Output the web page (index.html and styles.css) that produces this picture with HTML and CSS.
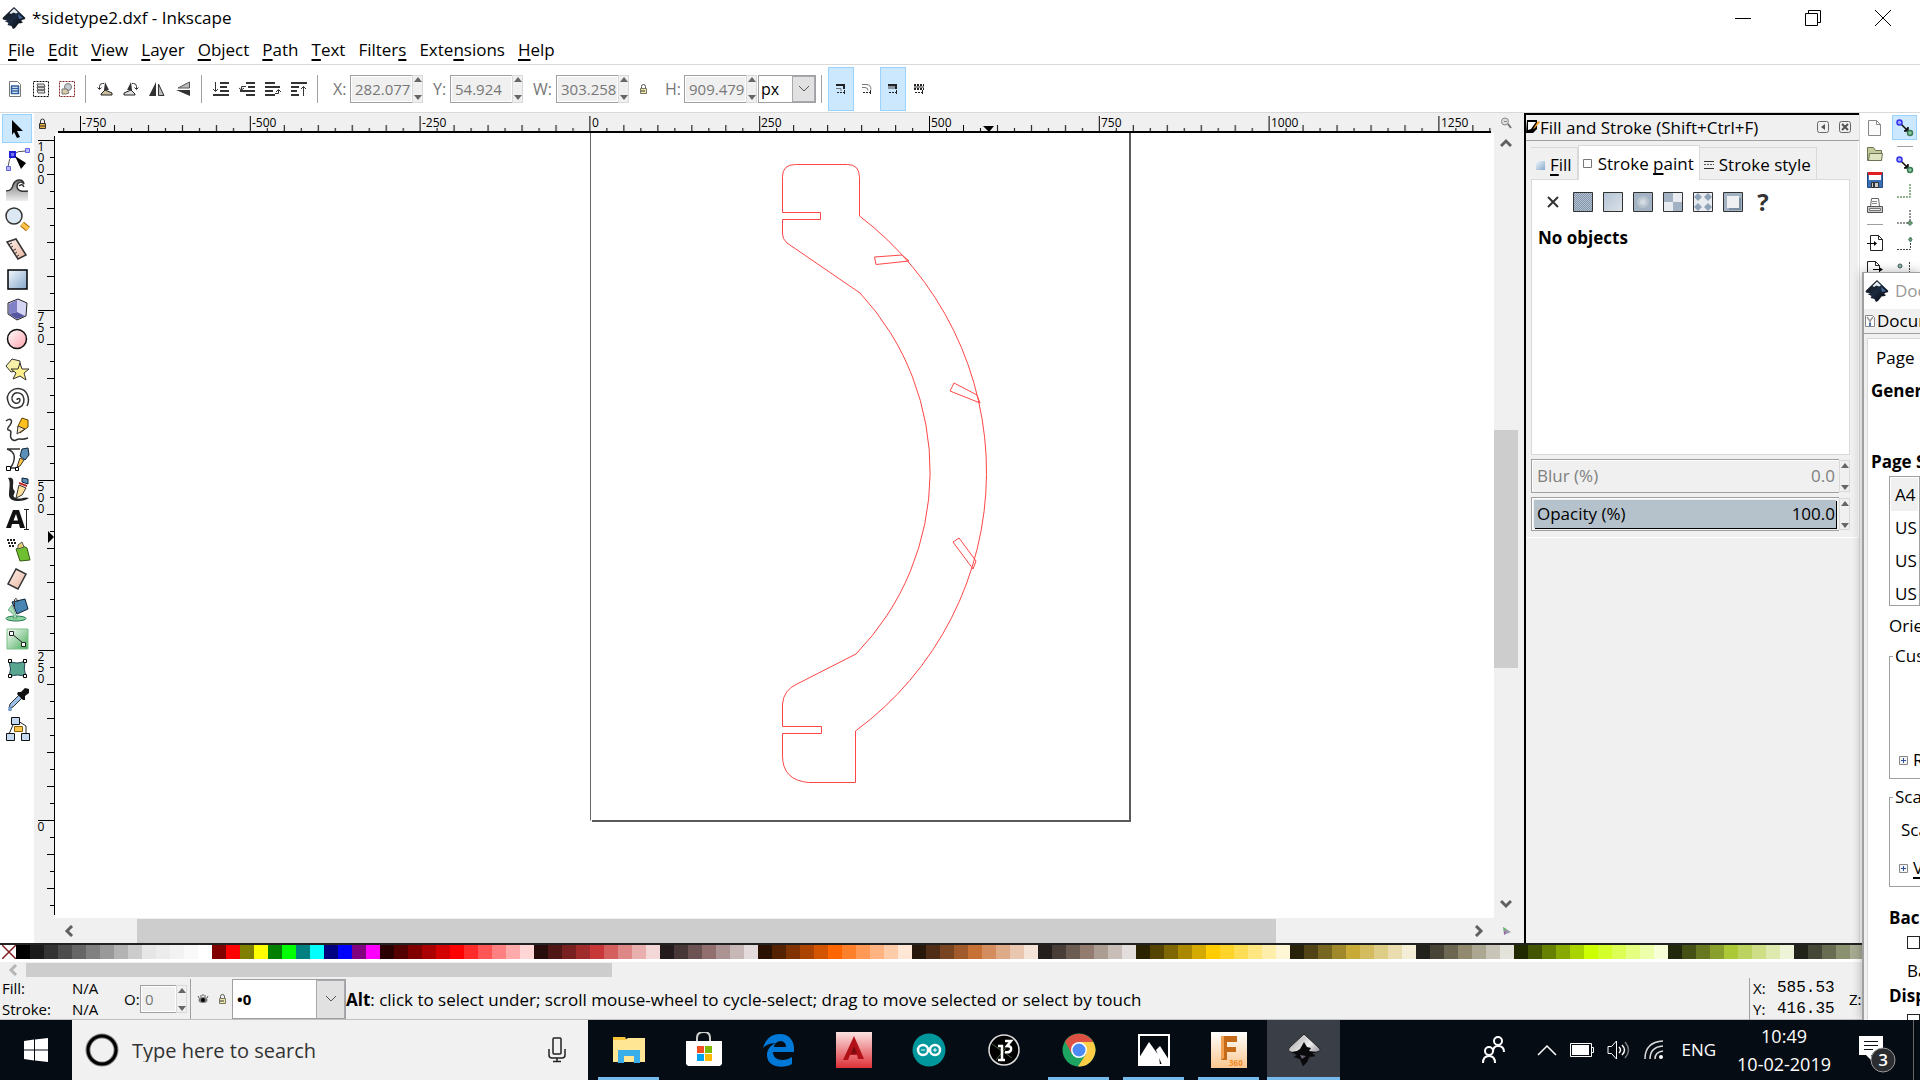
FILE: index.html
```html
<!DOCTYPE html>
<html lang="en">
<head>
<meta charset="utf-8">
<title>*sidetype2.dxf - Inkscape</title>
<link rel="stylesheet" href="styles.css">
</head>
<body>
<svg class="defs" width="0" height="0" aria-hidden="true">
  <defs>
    <linearGradient id="gInk" x1="0" y1="0" x2="1" y2="1"><stop offset="0" stop-color="#111"/><stop offset=".5" stop-color="#1b2a40"/><stop offset="1" stop-color="#000"/></linearGradient>
    <linearGradient id="gInkLight" x1="0" y1="0" x2="1" y2="1"><stop offset="0" stop-color="#999"/><stop offset=".5" stop-color="#eee"/><stop offset="1" stop-color="#445"/></linearGradient>
    <linearGradient id="gBlue" x1="0" y1="0" x2="1" y2="1"><stop offset="0" stop-color="#f4f8fc"/><stop offset="1" stop-color="#84a8cc"/></linearGradient>
    <linearGradient id="gPink" x1="0" y1="0" x2="1" y2="1"><stop offset="0" stop-color="#fff"/><stop offset="1" stop-color="#ffa0ac"/></linearGradient>
    <linearGradient id="gPeach" x1="0" y1="0" x2="1" y2="1"><stop offset="0" stop-color="#fdf1ec"/><stop offset="1" stop-color="#eab5a0"/></linearGradient>
    <linearGradient id="gGreen" x1="0" y1="0" x2="1" y2="1"><stop offset="0" stop-color="#fff"/><stop offset="1" stop-color="#45ab58"/></linearGradient>
    <linearGradient id="gGrey" x1="0" y1="0" x2="0" y2="1"><stop offset="0" stop-color="#777"/><stop offset="1" stop-color="#eee"/></linearGradient>
    <linearGradient id="gCad" x1="0" y1="0" x2="0" y2="1"><stop offset="0" stop-color="#fbe3e2"/><stop offset="1" stop-color="#de3038"/></linearGradient>
    <linearGradient id="gFusion" x1="0" y1="0" x2="0" y2="1"><stop offset="0" stop-color="#fff"/><stop offset="1" stop-color="#fac78f"/></linearGradient>
    <pattern id="mesh" width="2" height="2" patternUnits="userSpaceOnUse"><path fill="#8296ad" d="M0 0h1v1H0zM1 1h1v1H1z"/></pattern>
    <pattern id="ticksH" x="25" width="169.8" height="19" patternUnits="userSpaceOnUse">
      <path stroke="#000" d="M.5 3v16M17.5 15v4M34.5 12v7M51.5 15v4M68.5 12v7M85.5 15v4M102.5 12v7M119.5 15v4M136.5 12v7M153.5 15v4"/>
    </pattern>
    <pattern id="ticksV" y="7" width="21" height="170" patternUnits="userSpaceOnUse">
      <path stroke="#000" d="M4 .5h17M16 17.5h5M13 34.5h8M16 51.5h5M13 68.5h8M16 85.5h5M13 102.5h8M16 119.5h5M13 136.5h8M16 153.5h5"/>
    </pattern>
    <symbol id="ink" viewBox="0 0 24 24"><path d="M12 1 23 11.500c1 1.500-1 2-3 2.500-1.500 1-.5 1.500 1 2-1 1.500-3 1-4.500 1.500L15 19.500 13 22l-2 1-1.500-3-4-1 1-2-4-2 3-.5L1 13.500c-1-1 0-2 0-2z" fill="url(#gInk)"/><path d="m12 2.500 4 4-2 1-2.500-1L9 8 7.500 7z" fill="#e8edf4"/><path d="m16 8 5 4-4 1z" fill="#4a6c9c"/></symbol>
    <symbol id="lockOpen" viewBox="0 0 12 12"><path fill="none" stroke="#555" d="M4.500 5.500v-2q0-2 2-2t2 2v2"/><path fill="#f0e8a8" stroke="#776" d="M3.500 5.500h6v5h-6z"/><path stroke="#333" d="M4 8h4"/></symbol>
    <symbol id="snap" viewBox="0 0 18 18"><path stroke="#111" stroke-width="1.500" d="m5 5 7 7M12 8v4H8"/><circle cx="3.500" cy="3.500" r="2.500" fill="#a9a9ff" stroke="#3030e8" stroke-width="1.500"/><circle cx="14" cy="14" r="2.500" fill="#8cc89c" stroke="#3a7a55" stroke-width="1.500"/></symbol>
    <symbol id="chev" viewBox="0 0 12 12"><path fill="none" stroke="#606060" stroke-width="3" d="m1 9 5-5 5 5"/></symbol>
    <symbol id="plusBox" viewBox="0 0 9 9"><path fill="#f4f4f4" stroke="#888" d="M.5.5h8v8h-8z"/><path stroke="#2f4f9f" d="M2 4.500h5M4.500 2v5"/></symbol>
  </defs>
</svg>

<div class="desktop">
<main class="app">
  <header class="titlebar">
    <svg class="i24"><use href="#ink"/></svg>
    <h1 class="title">*sidetype2.dxf - Inkscape</h1>
    <div class="winbtns">
      <button aria-label="Minimize"><svg class="i16" viewBox="0 0 16 16"><path stroke="#000" d="M0 8.500h16"/></svg></button>
      <button aria-label="Restore"><svg class="i16" viewBox="0 0 16 16"><path fill="none" stroke="#000" d="M.5 3.500h12v12H.5zM3.500 3V.5h12v12H13"/></svg></button>
      <button aria-label="Close"><svg class="i16" viewBox="0 0 16 16"><path stroke="#000" d="m0 0 16 16M16 0 0 16"/></svg></button>
    </div>
  </header>

  <nav class="menubar">
    <button><u>F</u>ile</button><button><u>E</u>dit</button><button><u>V</u>iew</button><button><u>L</u>ayer</button><button><u>O</u>bject</button><button><u>P</u>ath</button><button><u>T</u>ext</button><button>Filter<u>s</u></button><button>Exte<u>n</u>sions</button><button><u>H</u>elp</button>
  </nav>

  <div class="toolbar">
    <div class="group">
      <button aria-label="Select all"><svg class="i16" viewBox="0 0 16 16"><path fill="#fff" stroke="#777" d="M2.500.5h8l3 3v12h-11z"/><path stroke="#2f5f9f" stroke-width="1.500" d="M4 5h8M4 7.500h8M4 10h8M4 12.500h8M4.500 5v8M11.500 5v8"/></svg></button>
      <button aria-label="Select all in all layers"><svg class="i16" viewBox="0 0 16 16"><path fill="none" stroke="#000" stroke-dasharray="2 1" d="M.5.5h15v15H.5z"/><path fill="#ddd" stroke="#555" d="m4 9 7 0 1 3H5zM4 6h7l1 3H5zM4 3h7l1 3H5z"/></svg></button>
      <button aria-label="Deselect"><svg class="i16" viewBox="0 0 16 16"><path fill="none" stroke="#802020" stroke-dasharray="2 1" d="M.5.5h15v15H.5z"/><circle cx="9" cy="6" r="3.500" fill="#c4ccd2" stroke="#777"/><path fill="#d8cba8" stroke="#777" d="M3 8h5l2 4-3 1H3z"/></svg></button>
    </div>
    <div class="group">
      <button aria-label="Rotate left"><svg class="i16" viewBox="0 0 16 16"><path fill="none" stroke="#333" d="M2.500 8V5.500q0-3 3-3H7M.5 6.500l2 2 2-2"/><path fill="#333" d="m8 1 4 8H7z"/><path fill="#c9bf9a" stroke="#222" d="m4 13 4-4 7 3v2H4z"/></svg></button>
      <button aria-label="Rotate right"><svg class="i16" viewBox="0 0 16 16"><path fill="none" stroke="#333" d="M13.500 8V5.500q0-3-3-3H9M11.500 6.500l2 2 2-2"/><path fill="#333" d="M8 1 4 9h5z"/><path fill="#ddd" stroke="#222" d="m12 13-4-4-7 3v2h11z"/></svg></button>
      <button aria-label="Flip horizontally"><svg class="i16" viewBox="0 0 16 16"><path fill="#333" d="M7 1v14H0z"/><path fill="#bbb" stroke="#333" d="M9.500 3v11.500H15z"/></svg></button>
      <button aria-label="Flip vertically"><svg class="i16" viewBox="0 0 16 16"><path fill="#bbb" stroke="#555" d="M14.500 1v6H3z"/><path fill="#333" d="M15 9v6L1 9z"/></svg></button>
    </div>
    <div class="group">
      <button aria-label="Lower to bottom"><svg class="i16" viewBox="0 0 16 16"><path stroke="#333" stroke-width="2" d="M7 2h9M7 6h7M7 10h9M0 14h16"/><path fill="none" stroke="#333" d="M2.500 1v9M0 8l2.500 2.500L5 8"/></svg></button>
      <button aria-label="Lower"><svg class="i16" viewBox="0 0 16 16"><path stroke="#333" stroke-width="2" d="M7 2h9M9 6h7M1 10h15M7 14h9"/><path fill="none" stroke="#333" d="M7 5.500H2.500V9M0 7l2.500 2L5 7"/></svg></button>
      <button aria-label="Raise"><svg class="i16" viewBox="0 0 16 16"><path stroke="#333" stroke-width="2" d="M0 2h10M0 6h15M0 10h8M0 14h10"/><path fill="none" stroke="#333" d="M10 12.500h3.500V9M11 11l2.500-2.500L16 11"/></svg></button>
      <button aria-label="Raise to top"><svg class="i16" viewBox="0 0 16 16"><path stroke="#333" stroke-width="2" d="M0 2h16M0 6h8M0 10h6M0 14h8"/><path fill="none" stroke="#333" d="M12.500 15V6M10 8l2.500-2.500L15 8"/></svg></button>
    </div>
    <div class="group fields">
      <label for="fx">X:</label><input class="num" id="fx" value="282.077" disabled><span class="spin"><button aria-label="Increase X"></button><button aria-label="Decrease X"></button></span>
      <label for="fy">Y:</label><input class="num" id="fy" value="54.924" disabled><span class="spin"><button aria-label="Increase Y"></button><button aria-label="Decrease Y"></button></span>
      <label for="fw">W:</label><input class="num" id="fw" value="303.258" disabled><span class="spin"><button aria-label="Increase width"></button><button aria-label="Decrease width"></button></span>
      <button class="lock" aria-label="Lock proportions"><svg class="i12"><use href="#lockOpen"/></svg></button>
      <label for="fh">H:</label><input class="num" id="fh" value="909.479" disabled><span class="spin"><button aria-label="Increase height"></button><button aria-label="Decrease height"></button></span>
      <select class="combo unit" aria-label="Unit"><option>px</option></select>
    </div>
    <div class="group toggles">
      <button class="on" aria-label="Scale stroke width"><svg class="i12" viewBox="0 0 12 12"><path stroke="#222" stroke-width="2" fill="none" d="M1 2h8v4"/><path stroke="#777" fill="none" d="M1 5.500h5V8"/><path stroke="#222" d="M2 9.500h9M9.500 7v4" stroke-dasharray="2 1"/></svg></button>
      <button aria-label="Scale corners"><svg class="i12" viewBox="0 0 12 12"><path stroke="#777" fill="none" d="M1 1.500h4q5 0 5 5M1 4.500h3q3 0 3 3"/><path stroke="#222" d="M2 9.500h9M9.500 7v4" stroke-dasharray="2 1"/></svg></button>
      <button class="on" aria-label="Move gradients"><svg class="i12" viewBox="0 0 12 12"><path fill="#8a95a5" d="M1 1h8v5H1z"/><path stroke="#222" stroke-width="2" fill="none" d="M1 2h8v4"/><path stroke="#222" d="M2 9.500h9M9.500 7v4" stroke-dasharray="2 1"/></svg></button>
      <button aria-label="Move patterns"><svg class="i12" viewBox="0 0 12 12"><path stroke="#222" stroke-width="2" d="M1 2h10M1 6h10" stroke-dasharray="2 1"/><path stroke="#222" d="M1 4h10"/><path stroke="#222" d="M2 9.500h9M9.500 7v4" stroke-dasharray="2 1"/></svg></button>
    </div>
  </div>

  <div class="work">
    <div class="toolbox">
      <button class="on" aria-label="Select"><svg viewBox="0 0 24 24"><path d="m7 3 11 11h-6l3 6-3 1-3-6-2 3z"/></svg></button>
      <button aria-label="Edit nodes"><svg viewBox="0 0 24 24"><path fill="none" stroke="#555" d="M3 20Q4 3 21 4"/><path fill="#b8b8ff" stroke="#6060e0" d="M1.500 19.500h4v4h-4zM20.500 1.500h4v4h-4z"/><path fill="#7878f0" stroke="#2020d8" stroke-width="2" d="M5 5h5v5H5z"/><path d="m10 9 11 7-5 6z"/></svg></button>
      <button aria-label="Tweak"><svg viewBox="0 0 24 24"><path fill="url(#gGrey)" d="M1 24V15q6 0 7-7c1-4 6-6 9-4-4 0-6 4-5 7s5 4 11 4v9z"/><path fill="none" stroke="#333" stroke-width="1.500" d="M1 14q6 0 7-6c2-6 10-7 11-1-3-4-7-1-7 2 0 5 5 6 11 5M14 9q3-3 5 1"/></svg></button>
      <button aria-label="Zoom"><svg viewBox="0 0 24 24"><path stroke="#a66a00" stroke-width="6" d="m17 17 6 5"/><path stroke="#ffc24a" stroke-width="4" d="m17 17 6 5"/><circle cx="9" cy="9" r="8" fill="#dbe8f4" stroke="#333" stroke-width="1.500"/></svg></button>
      <button aria-label="Measure"><svg viewBox="0 0 24 24"><path fill="url(#gPeach)" stroke="#333" stroke-width="1.500" d="m2 5 9-3 10 16-8 4z"/><path stroke="#333" d="m3 8 4-2M5 11l3-2M7 14l4-2M9 17l3-2M11 20l3-2"/></svg></button>
      <button aria-label="Rectangle"><svg viewBox="0 0 24 24"><path fill="url(#gBlue)" stroke="#000" stroke-width="1.500" d="M3 3h19v19H3z"/></svg></button>
      <button aria-label="3D box"><svg viewBox="0 0 24 24"><path fill="#d4d4f4" stroke="#222" d="m3 6 10-4 9 4-1 13-9 4-9-6z"/><path fill="#5656a0" d="m12 15 8 4-8 3-8-5z"/><path fill="#8080c4" d="m4 7 8-4v12l-8 2z"/></svg></button>
      <button aria-label="Ellipse"><svg viewBox="0 0 24 24"><circle cx="12" cy="12" r="9.500" fill="url(#gPink)" stroke="#111" stroke-width="1.500"/></svg></button>
      <button aria-label="Star"><svg viewBox="0 0 24 24"><path fill="#f8f0a8" stroke="#333" d="m1 9 6-7 8 2v9l-9 2z"/><path fill="#fff08a" stroke="#333" d="m15 6 2 6 7 0-5 4 2 7-6-4-7 3 3-6-5-4h7z"/></svg></button>
      <button aria-label="Spiral"><svg viewBox="0 0 24 24"><path fill="none" stroke="#333" stroke-width="1.500" d="M12 13c0-2 3-2 3 0s-2 4-5 3-4-5-2-8 8-3 10 1 1 9-3 11-9 1-11-3-3-9 2-13 13-3 16 3 1 10 0 12"/></svg></button>
      <button aria-label="Pencil"><svg viewBox="0 0 24 24"><path fill="none" stroke="#333" stroke-width="1.500" d="M1 4c5-4 7 0 4 4-6 7 1 4 1 7-2 8 3 9 5 8 5-3 3 1 12-2"/><path fill="#ffc020" stroke="#5a4000" d="m13 9 4-8 6 2v7l-8 6z"/><path fill="#f7e3c0" stroke="#333" d="m13 9-1 8 8-5z"/></svg></button>
      <button aria-label="Bezier"><svg viewBox="0 0 24 24"><path fill="none" stroke="#333" stroke-width="1.500" d="M2 2h13M2 2c10 3 8 12 4 18M5 21h7"/><path fill="#fff" stroke="#000" d="M1.500 19.500h4v4h-4zM10.500 20.500h3v3h-3z"/><path fill="#5c8fb8" stroke="#123" d="m17 2 6-1 1 7-4 5-5-4z"/><path fill="#ffc84a" stroke="#333" d="m15 11 4 2-4 6-3 1z"/></svg></button>
      <button aria-label="Calligraphy"><svg viewBox="0 0 24 24"><path fill="#222" d="M3 1c9-2 3 9 6 12s-4 6 2 8 8-2 13 0c-5 4-20 5-20-3 0-7 2-13-1-17z"/><path fill="#5c8fb8" stroke="#123" d="m17 1 6 1v5l-6-2z"/><path fill="#c02020" d="m14 5 8 3v2l-8-3z"/><path fill="#ffe09a" stroke="#333" d="m14 8 7 3-4 7-6 3z"/></svg></button>
      <button aria-label="Text"><svg viewBox="0 0 24 24"><path fill="#111" d="M1 21 8 3h6l6 18h-5l-1-4H7l-1 4zM8.500 13.500h4.500L11 7z" fill-rule="evenodd"/><path fill="none" stroke="#222" d="M19 2.500h5M21.500 3v19M19 22.500h5"/></svg></button>
      <button aria-label="Spray"><svg viewBox="0 0 24 24"><path fill="#6fc030" stroke="#335a10" d="m11 12 7-3 4 2 3 12-10 1z"/><path fill="#e8d070" stroke="#555" d="m13 8 4-3 2 5-6 2z"/><path stroke="#222" stroke-width="2" stroke-dasharray="2 1" d="M2 3h9M3 6h8M4 9h6"/></svg></button>
      <button aria-label="Eraser"><svg viewBox="0 0 24 24"><path fill="url(#gPeach)" stroke="#333" stroke-width="1.500" d="m11 2 10 5-8 15-10-5z"/></svg></button>
      <button aria-label="Paint bucket"><svg viewBox="0 0 24 24"><ellipse cx="11" cy="21.500" rx="10" ry="2.500" fill="#8bd49a" stroke="#275"/><path fill="#a9dcb4" stroke="#275" stroke-width=".5" d="M7 8 3 13l4 3q3 2 1 5h4l-2-6z"/><path fill="#4a86b4" stroke="#123" d="m7 5 13-3 3 10-11 5z"/><path fill="none" stroke="#333" d="M9.500 11V3q2-4 3 2"/></svg></button>
      <button aria-label="Gradient"><svg viewBox="0 0 24 24"><path fill="url(#gGreen)" stroke="#7dc08a" d="M2 2h21v20H2z"/><path stroke="#222" d="m7 7 11 9"/><path fill="#fff" stroke="#222" d="M4.500 4.500h4v4h-4zM16.500 15.500h4v4h-4z"/></svg></button>
      <button aria-label="Mesh"><svg viewBox="0 0 24 24"><path fill="#58a590" stroke="#245" d="M4 4q8 4 16 0-2 8 1 16-8-4-17 0 3-8 0-16z"/><path fill="#fff" stroke="#000" d="M3.500 2.500h3v3h-3zM18.500 2.500h3v3h-3zM3.500 17.500h3v3h-3zM18.500 17.500h3v3h-3z"/></svg></button>
      <button aria-label="Dropper"><svg viewBox="0 0 24 24"><path fill="#9cc0e8" stroke="#333" d="m14 8 3 3-9 9-4 1 1-4z"/><path fill="#111" d="m13 5 3 0 4-4 4 1 0 4-4 3 0 4-2 0-6-6z"/><path fill="#6a98d0" d="M5 19q4 5 0 5t0-5z"/></svg></button>
      <button aria-label="Connector"><svg viewBox="0 0 24 24"><path fill="none" stroke="#222" d="M8 8 4 17M13 4l8 5v8"/><path fill="#c4d8f0" stroke="#111" d="M6.500.5h8v7h-8zM1.500 16.500h8v7h-8zM16.500 16.500h8v7h-8z"/><path fill="#ffc84a" stroke="#8a5a00" d="M9.500 9.500h8v5h-8z"/></svg></button>
    </div>

    <div class="view">
      <div class="corner"><svg class="i12" viewBox="0 0 12 12"><path fill="none" stroke="#333" d="M4.500 5V3q0-2 2-2t2 2v2"/><path fill="#e8b040" stroke="#333" d="M3.500 5.500h6v5h-6z"/><path stroke="#333" d="M4 8h5"/></svg></div>
      <svg class="hruler">
        <rect width="100%" height="19" fill="url(#ticksH)"/>
        <path stroke="#000" stroke-width="2" d="M3 19H1436"/>
        <path d="m928 13h11l-5 6z"/>
        <text x="27" y="14">-750</text><text x="197" y="14">-500</text><text x="367" y="14">-250</text><text x="537" y="14">0</text><text x="706" y="14">250</text><text x="876" y="14">500</text><text x="1046" y="14">750</text><text x="1216" y="14">1000</text><text x="1386" y="14">1250</text>
      </svg>
      <div class="zoomcell"><svg class="i12" viewBox="0 0 12 12"><circle cx="5" cy="4.500" r="3.500" fill="#ddd" stroke="#888"/><path stroke="#777" stroke-width="2" d="m8 7 3 4"/><path stroke="#888" d="M4 4.500h3"/></svg></div>

      <svg class="vruler">
        <rect y="3" width="21" height="779" fill="url(#ticksV)"/>
        <path stroke="#000" d="M20.500 3v779"/>
        <path d="m14 398 6 6-6 6z"/>
        <g text-anchor="middle">
          <text x="7" y="18">1</text><text x="7" y="29">0</text><text x="7" y="40">0</text><text x="7" y="51">0</text>
          <text x="7" y="188">7</text><text x="7" y="199">5</text><text x="7" y="210">0</text>
          <text x="7" y="358">5</text><text x="7" y="369">0</text><text x="7" y="380">0</text>
          <text x="7" y="528">2</text><text x="7" y="539">5</text><text x="7" y="550">0</text>
          <text x="7" y="698">0</text>
        </g>
      </svg>
      <div class="canvas">
        <svg class="sheet" width="1438" height="784" viewBox="55 133 1438 784">
          <path fill="none" stroke="#666" d="M590.500 133v687.500"/>
          <path fill="none" stroke="#5a5a5a" stroke-width="2" d="M592 821h538V133"/>
          <g fill="none" stroke="#ff4646">
            <path d="M782.500 212.500V176.500Q782.500 164.500 795.500 164.500H847.500Q859.500 164.500 859.500 177.500V216A321.500 321.500 0 0 1 855.500 731V782.500H808.500Q782.500 780 782.500 756V733.500H821.500V726.500H782.500V704Q783.500 690 797 684L856 654A262 262 0 0 0 860 293L787 243Q782.500 239 782.500 234V219.500H820.500V212.500Z"/>
            <path d="m874.500 257 27.500-2 7 6-33 3.500zM954 383l-4 8 30 12-3-8zM953 542l6-4 17 23-3 8z"/>
          </g>
        </svg>
      </div>
      <div class="vscroll"><svg class="i12"><use href="#chev"/></svg><span class="track"><span class="thumb"></span></span><svg class="i12 down"><use href="#chev"/></svg></div>

      <div class="corner"></div>
      <div class="hscroll"><svg class="i12 left"><use href="#chev"/></svg><span class="track"><span class="thumb"></span></span><svg class="i12 right"><use href="#chev"/></svg></div>
      <div class="zoomcell"><svg class="i12" viewBox="0 0 12 12"><path fill="#99a" d="m3 2 8 5-7 3z"/><path fill="#6b6" d="m3 2 4 2.500L4 6z"/><path fill="#a4a" d="m4 7 2-1-2 4z"/></svg></div>
    </div>

    <aside class="dock">
      <div class="dockhead">
        <svg class="i14" viewBox="0 0 14 14"><path d="M1 0h10v9l-4 4H0z"/><path fill="#fff" d="M2 2h8L5 9 2 10z"/><path fill="#f0a020" d="m12 1 2 1-5 6-2 1z"/></svg>
        <h2>Fill and Stroke (Shift+Ctrl+F)</h2>
        <button aria-label="Iconify"><svg class="i12" viewBox="0 0 12 12"><rect x=".5" y=".5" width="11" height="11" rx="2" fill="none" stroke="#666"/><path fill="#555" d="M8 3v6L4 6z"/></svg></button>
        <button aria-label="Close dialog"><svg class="i12" viewBox="0 0 12 12"><rect x=".5" y=".5" width="11" height="11" rx="2" fill="none" stroke="#666"/><path stroke="#555" stroke-width="2" d="m3 3 6 6M9 3 3 9"/></svg></button>
      </div>
      <div class="dockbody">
        <div class="tabs">
          <button><svg class="i10" viewBox="0 0 10 10"><path fill="url(#gBlue)" d="M1 1h9v9H1z"/></svg><span><u>F</u>ill</span></button>
          <button class="active"><svg class="i10" viewBox="0 0 10 10"><path fill="#fff" stroke="#777" d="M.5.5h8v8h-8z"/></svg><span>Stroke <u>p</u>aint</span></button>
          <button><svg class="i10" viewBox="0 0 10 10"><path stroke="#333" d="M0 1.500h10M0 8.500h10"/><path stroke="#555" stroke-dasharray="2 1" d="M0 4.500h10"/></svg><span>Stroke style</span></button>
        </div>
        <div class="tabpage">
          <div class="paints">
            <button aria-label="No paint"><svg class="i20" viewBox="0 0 20 20"><path stroke="#333" stroke-width="2" d="m5 5 10 10M15 5 5 15"/></svg></button>
            <button aria-label="Flat color"><svg class="i20" viewBox="0 0 20 20"><path fill="#b4c0ce" d="M0 0h20v20H0z"/><path fill="url(#mesh)" stroke="#333" d="M.5.5h19v19H.5z"/></svg></button>
            <button aria-label="Linear gradient"><svg class="i20" viewBox="0 0 20 20"><path fill="url(#gBlue)" d="M0 0h20v20H0z" transform="rotate(180 10 10)"/><path fill="#cfd4da" fill-opacity=".6" stroke="#333" d="M.5.5h19v19H.5z"/></svg></button>
            <button aria-label="Radial gradient"><svg class="i20" viewBox="0 0 20 20"><path fill="#a3b3c4" stroke="#333" d="M.5.5h19v19H.5z"/><circle cx="10" cy="10" r="6" fill="#b9c4d0"/><circle cx="10" cy="10" r="3" fill="#d2d9e0"/></svg></button>
            <button aria-label="Mesh gradient"><svg class="i20" viewBox="0 0 20 20"><path fill="#e8ebef" stroke="#333" d="M.5.5h19v19H.5z"/><path fill="#a3b3c4" d="M1 1h9v9H1zM10 10h9v9h-9z"/></svg></button>
            <button aria-label="Pattern"><svg class="i20" viewBox="0 0 20 20"><path fill="#e8ebef" stroke="#333" d="M.5.5h19v19H.5z"/><path fill="#8fa3b8" d="m5 1 4 4-4 4-4-4zM15 1l4 4-4 4-4-4zM5 11l4 4-4 4-4-4zM15 11l4 4-4 4-4-4z"/></svg></button>
            <button aria-label="Swatch"><svg class="i20" viewBox="0 0 20 20"><path fill="#a3b3c4" stroke="#333" d="M.5.5h19v19H.5z"/><path fill="#7c8ea2" d="M6 6h12v12H6z"/><path fill="#eef0f2" d="M4 4h12v12H4z"/></svg></button>
            <button aria-label="Unset paint" class="unset">?</button>
          </div>
          <p class="noobj">No objects</p>
        </div>
        <div class="slider off"><label for="blur">Blur (%)</label><input id="blur" value="0.0" disabled><span class="spin"><button aria-label="Increase blur"></button><button aria-label="Decrease blur"></button></span></div>
        <div class="slider full"><label for="opac">Opacity (%)</label><input id="opac" value="100.0"><span class="spin"><button aria-label="Increase opacity"></button><button aria-label="Decrease opacity"></button></span></div>
      </div>
    </aside>

    <div class="commands">
      <div class="col">
        <button aria-label="New"><svg class="i18" viewBox="0 0 18 18"><path fill="#fafafa" stroke="#888" d="M2.500 1.500h8l4 4v11h-12z"/><path fill="none" stroke="#888" d="M10.500 1.500v4h4"/></svg></button>
        <button aria-label="Open"><svg class="i18" viewBox="0 0 18 18"><path fill="#c4cc9c" stroke="#6a7456" d="M1.500 15.500v-13h6l2 3h6v10z"/><path fill="#dfe4c0" stroke="#6a7456" d="M3.500 8.500h13l-1 7h-13z"/></svg></button>
        <button aria-label="Save"><svg class="i18" viewBox="0 0 18 18"><path fill="#3b6fb6" stroke="#234a80" d="M1.500 1.500h15v15h-15z"/><path fill="#e02020" d="M2 1h14v3H2z"/><path fill="#fff" d="M3 4h12v5H3z"/><path fill="#ccc" stroke="#333" d="M5.500 11.500h7v5h-7z"/><path fill="#333" d="M7 12h2v4H7z"/></svg></button>
        <button aria-label="Print"><svg class="i18" viewBox="0 0 18 18"><path fill="#fff" stroke="#666" d="m4.500 9.500 1-8h7l1 8z"/><path stroke="#888" d="M6 4.500h5M6 6.500h5"/><path fill="#ccc" stroke="#555" d="M1.500 9.500h15v6h-15z"/><path fill="#eee" stroke="#777" d="M3.500 11.500h11v2h-11z"/></svg></button>
        <hr>
        <button aria-label="Import"><svg class="i18" viewBox="0 0 18 18"><path fill="#fff" stroke="#222" d="M4.500 1.500h8l4 4v11h-12z"/><path fill="none" stroke="#222" d="M12.500 1.500v4h4"/><path stroke="#000" d="M1 9.500h9"/><path d="m8 7 3 2.500L8 12z"/></svg></button>
        <button aria-label="Export"><svg class="i18" viewBox="0 0 18 18"><path fill="#fff" stroke="#222" d="M1.500 1.500h8l4 4v11h-12z"/><path fill="none" stroke="#222" d="M9.500 1.500v4h4"/><path stroke="#000" d="M7 9.500h9"/><path d="m13 7 4 2.500-4 2.500z"/></svg></button>
      </div>
      <div class="col">
        <button class="on" aria-label="Enable snapping"><svg class="i18"><use href="#snap"/></svg></button>
        <hr>
        <button aria-label="Snap bounding boxes"><svg class="i18"><use href="#snap"/></svg></button>
        <button aria-label="Snap edges"><svg class="i18" viewBox="0 0 18 18"><path fill="none" stroke="#6a9a6a" stroke-width="1.500" stroke-dasharray="2 1" d="M1 15h13V2"/></svg></button>
        <button aria-label="Snap corners"><svg class="i18" viewBox="0 0 18 18"><path fill="none" stroke="#777" stroke-width="1.500" stroke-dasharray="2 1" d="M1 15h13V2"/><path fill="#6a9a6a" stroke="#476" d="m14 12.500 2.500 2.500-2.500 2.500-2.500-2.500z"/></svg></button>
        <button aria-label="Snap midpoints"><svg class="i18" viewBox="0 0 18 18"><path fill="none" stroke="#444" stroke-dasharray="2 1" d="M1 15.500h13.500V2"/><path fill="#6a9a6a" stroke="#476" d="m14.500 3 1.500 2.500-1.500 2.500-2-2.500z"/></svg></button>
        <button aria-label="Snap centers"><svg class="i18" viewBox="0 0 18 18"><path fill="none" stroke="#444" stroke-dasharray="2 1" d="M13.500 2v15"/><circle cx="4" cy="6" r="2" fill="#8fc09a" stroke="#456"/></svg></button>
      </div>
    </div>
  </div>

  <div class="palette" id="palette">
    <button class="none" aria-label="None"><svg viewBox="0 0 14 14" width="14" height="14"><path fill="#fff" d="M0 0h14v14H0z"/><path stroke="#802020" stroke-width="1.500" d="m0 0 14 14M14 0 0 14"/></svg></button>
  </div>
  <div class="palscroll"><svg class="i12 left"><use href="#chev"/></svg><span class="thumb"></span></div>

  <footer class="status">
    <dl class="style"><dt>Fill:</dt><dd>N/A</dd><dt>Stroke:</dt><dd>N/A</dd></dl>
    <div class="opacity"><label for="mo">O:</label><input class="num" id="mo" value="0" disabled><span class="spin"><button aria-label="Increase opacity"></button><button aria-label="Decrease opacity"></button></span></div>
    <div class="layer">
      <button aria-label="Toggle layer visibility"><svg class="i12" viewBox="0 0 12 12"><ellipse cx="6" cy="7" rx="4.500" ry="3" fill="#777"/><circle cx="6" cy="7" r="2"/><path stroke="#555" d="M2 5 1 3M4 4V2M6 3V1M8 4V2M10 5l1-2"/></svg></button>
      <button aria-label="Lock layer"><svg class="i12"><use href="#lockOpen"/></svg></button>
      <select class="combo layers" aria-label="Layer"><option>•0</option></select>
    </div>
    <p class="hint"><b>Alt</b>: click to select under; scroll mouse-wheel to cycle-select; drag to move selected or select by touch</p>
    <dl class="coords"><dt>X:</dt><dd>585.53</dd><dt>Y:</dt><dd>416.35</dd></dl>
    <label class="zoomlabel">Z:</label>
  </footer>

  <section class="props">
    <header class="ptitle"><svg class="i24"><use href="#ink"/></svg><span>Document</span></header>
    <div class="phead"><svg class="i12" viewBox="0 0 12 12"><path fill="#fff" stroke="#888" d="M1.500.5h7l2 2v9h-9z"/><path stroke="#999" stroke-width="1.500" fill="none" d="m3 2 3 4 3-4M6 6v3"/><path stroke="#47a" stroke-width="2" d="M6 8v3"/></svg><span>Document</span></div>
    <div class="pbody">
      <div class="ptab">Page</div>
      <h3 class="general">General</h3>
      <h3 class="size">Page Size</h3>
      <ul class="sizes"><li class="sel">A4</li><li>US Letter</li><li>US Legal</li><li>US Executive</li></ul>
      <p class="orient">Orientation:</p>
      <fieldset class="custom"><legend>Custom</legend><p><svg class="i9"><use href="#plusBox"/></svg><span>Resize</span></p></fieldset>
      <fieldset class="scale"><legend>Scale</legend><p>Scale x:</p><p class="vb"><svg class="i9"><use href="#plusBox"/></svg><span><u>V</u>iewbox</span></p></fieldset>
      <h3 class="bg">Background</h3>
      <label class="check"><input type="checkbox" aria-label="Checkerboard background"></label>
      <p class="bgc">Background color:</p>
      <h3 class="disp">Display</h3>
      <label class="check"><input type="checkbox" aria-label="Use antialiasing"></label>
    </div>
  </section>
</main>

<nav class="taskbar">
  <button class="start" aria-label="Start"><svg width="24" height="24" viewBox="0 0 24 24"><path fill="#fff" d="m0 3 10-1.500v10H0zM11 1.500 24 0v11.500H11zM0 12.500h10v10L0 21zM11 12.500h13V24l-13-1.500z"/></svg></button>
  <div class="search">
    <svg width="34" height="34" viewBox="0 0 34 34"><circle cx="17" cy="17" r="14" fill="none" stroke="#888" stroke-width="5"/><circle cx="17" cy="17" r="14" fill="none" stroke="#000" stroke-width="3"/></svg>
    <input placeholder="Type here to search" aria-label="Type here to search">
    <svg width="18" height="26" viewBox="0 0 18 26"><rect x="5" y="1" width="8" height="16" rx="1" fill="none" stroke="#222" stroke-width="1.500"/><path fill="none" stroke="#222" stroke-width="1.500" d="M1 12v6q0 3 3 3h10q3 0 3-3v-6M9 21v3M5 24.500h8"/></svg>
  </div>
  <div class="tasks">
    <button class="run" aria-label="File Explorer"><svg viewBox="0 0 36 36"><path fill="#f8c53a" d="M2 5h12l2 4-2 3H2z"/><path fill="#ffe694" d="M2 8h12l3-2h17v24H2z"/><path fill="#3aaee8" d="M7 18h22v13h-6v-7H13v7H7z"/></svg></button>
    <button aria-label="Store"><svg viewBox="0 0 36 36"><path fill="none" stroke="#ccc" stroke-width="2" d="M11 9V6q0-6 7-6 6 0 6 6v3"/><path fill="#fff" d="M0 9h36v23l-2 2H2l-2-2z"/><path fill="#f25022" d="M11 14h7v7h-7z"/><path fill="#7fba00" d="M19 14h7v7h-7z"/><path fill="#00a4ef" d="M11 22h7v7h-7z"/><path fill="#ffb900" d="M19 22h7v7h-7z"/></svg></button>
    <button aria-label="Edge"><svg viewBox="0 0 36 36"><path fill="#0078d7" d="M2 16C5 6 11 2 19 2c10 0 14 8 14 14v4H12c0 9 12 10 19 5v7c-8 5-25 4-25-9 0-6 4-10 9-12-7 0-11 3-13 5zM13 15h12c0-8-11-7-12 0z"/></svg></button>
    <button aria-label="AutoCAD"><svg viewBox="0 0 36 36"><path fill="url(#gCad)" d="M0 0h36v36H0z"/><path fill="#b01218" d="m18 4 10 23h-6l-1-4h-7l-2 5H7z"/><path fill="#7a0c10" d="m18 14 3 7-6 1z"/></svg></button>
    <button aria-label="Arduino"><svg viewBox="0 0 36 36"><circle cx="18" cy="18" r="16.500" fill="#00979c"/><g fill="none" stroke="#fff" stroke-width="2.500"><circle cx="12" cy="18" r="5"/><circle cx="24" cy="18" r="5"/></g><path stroke="#fff" d="M10 18h4M22 18h4M24 16v4"/></svg></button>
    <button aria-label="Processing"><svg viewBox="0 0 36 36"><circle cx="18" cy="18" r="15" fill="#000" stroke="#ddd" stroke-width="1.500"/><path fill="none" stroke="#4a6040" d="m6 12 20 14M10 28 26 8"/><path fill="none" stroke="#fff" stroke-width="2.500" d="M12 14h4v14M12 28h7M19 9h6l-4 5q5 0 4 4-1 3-6 2"/></svg></button>
    <button class="run" aria-label="Chrome"><svg viewBox="0 0 36 36"><circle cx="18" cy="18" r="16.500" fill="#1da462"/><path fill="#dd5144" d="M4 9.500A16.500 16.500 0 0 1 32.300 10H18l-7 12z"/><path fill="#ffcd46" d="M32.300 10A16.500 16.500 0 0 1 17 34.500l8-12.500q2-6-7-12z"/><circle cx="18" cy="18" r="8" fill="#fff"/><circle cx="18" cy="18" r="6.500" fill="#4c8bf5"/></svg></button>
    <button class="run" aria-label="Photos"><svg viewBox="0 0 36 36"><path fill="#050a10" stroke="#fff" stroke-width="2" d="M3 3h30v30H3z"/><path fill="#fff" d="m3 26 10-16 10 14 1 9H3zM20 18l4-4 9 14v5h-7z"/></svg></button>
    <button class="run" aria-label="Fusion 360"><svg viewBox="0 0 36 36"><path fill="url(#gFusion)" d="M0 0h36v36H0z"/><path fill="#c56a18" d="M10 4h16v6H16v5h9v5h-9v8h-6z"/><path fill="#f2a050" d="M10 4h3v22l-3 2z"/><text x="18" y="34" font-size="8" font-weight="700" fill="#f08a24">360</text></svg></button>
    <button class="run current" aria-label="Inkscape"><svg viewBox="0 0 36 36"><path fill="url(#gInkLight)" stroke="#222" d="m18 2 15 14q3 3-2 4l-5 1 3 3-6 1-2 5-4 4-3-7-6-2 3-2-6-3q-4-1-2-4z"/><path fill="#0a0a0c" d="m18 10 3 5 4 1-2 3 8 1-5 1 3 3-6 1-2 5-4 4-3-7-6-2 3-2-6-3 6-1 3-2z"/><path fill="#667" d="m14 23 6 1-4 3z"/></svg></button>
  </div>
  <div class="tray">
    <svg width="24" height="28" viewBox="0 0 24 28"><g fill="none" stroke="#fff" stroke-width="2"><circle cx="17" cy="5" r="4"/><path d="M12 16q0-6 5-6 6 0 6 6"/><circle cx="8" cy="15" r="4"/><path d="M2 27q0-7 6-7t6 7"/></g></svg>
    <svg width="20" height="12" viewBox="0 0 20 12"><path fill="none" stroke="#fff" stroke-width="1.500" d="m1 11 9-9 9 9"/></svg>
    <svg width="24" height="14" viewBox="0 0 24 14"><path fill="none" stroke="#fff" d="M.5.5h21v13H.5zM21.500 4.500h2v5h-2"/><path fill="#fff" d="M2 2h17v10H2z"/></svg>
    <svg width="24" height="20" viewBox="0 0 24 20"><path fill="none" stroke="#fff" d="M1 6.500h3.500L9.500 1v18l-5-5.500H1z"/><path fill="none" stroke="#fff" stroke-width="1.500" d="M12 7q3 3 0 6M15 5q5 5 0 10"/><path fill="none" stroke="#777" stroke-width="1.500" d="M18 2q7 8 0 16"/></svg>
    <svg width="20" height="20" viewBox="0 0 20 20"><g fill="none" stroke="#ddd" stroke-width="1.500"><path d="M1 19Q1 2 19 1M6 19Q6 7 19 6M11 19q0-7 8-8"/></g><circle cx="17" cy="17" r="2" fill="#fff"/></svg>
    <span class="lang">ENG</span>
    <div class="clock"><time>10:49</time><time>10-02-2019</time></div>
    <button class="notify" aria-label="Notifications"><svg width="38" height="38" viewBox="0 0 38 38"><path fill="#fff" d="M0 1h24v19H12v5l-5-5H0z"/><path stroke="#0b0f16" d="M5 6.500h14M5 10.500h14M5 14.500h9"/><circle cx="24" cy="25" r="12" fill="#2b2d30" stroke="#999"/><text x="24" y="31" text-anchor="middle" font-size="17" font-weight="600" fill="#fff">3</text></svg></button>
    <span class="peek"></span>
  </div>
</nav>
</div>
<script src="palette.js"></script>
</body>
</html>
```
FILE: palette.js
```js
// Default Inkscape palette: greys, web basics, then each hue in three saturations.
const colors = (
  "000000 1a1a1a 333333 4d4d4d 666666 808080 999999 b3b3b3 cccccc e6e6e6 ececec f2f2f2 f9f9f9 ffffff " +
  "800000 ff0000 808000 ffff00 008000 00ff00 008080 00ffff 000080 0000ff 800080 ff00ff " +
  "2b0000 550000 800000 aa0000 d40000 ff0000 ff2a2a ff5555 ff8080 ffaaaa ffd5d5 " +
  "280b0b 501616 782121 a02c2c c83737 d35f5f de8787 e9afaf f4d7d7 " +
  "241c1c 483737 6c5353 916f6f ac9393 c8b7b7 e3dbdb " +
  "2b1100 552200 803300 aa4400 d45500 ff6600 ff7f2a ff9955 ffb380 ffccaa ffe6d5 " +
  "28170b 502d16 784421 a05a2c c87137 d38d5f deaa87 e9c6af f4e3d7 " +
  "241f1c 483e37 6c5d53 917c6f ac9d93 c8beb7 e3dedb " +
  "2b2200 554400 806600 aa8800 d4aa00 ffcc00 ffd42a ffdd55 ffe680 ffeeaa fff6d5 " +
  "28220b 504416 786721 a0892c c8ab37 d3bc5f decd87 e9ddaf f4eed7 " +
  "24221c 484537 6c6753 918a6f aca793 c8c4b7 e3e2db " +
  "222b00 445500 668000 88aa00 aad400 ccff00 d4ff2a ddff55 e5ff80 eeffaa f6ffd5 " +
  "22280b 445016 677821 89a02c abc837 bcd35f cdde87 dde9af eef4d7 " +
  "22241c 454837 676c53 8a916f a7ac93 c4c8b7 e2e3db"
).split(" ");
const palette = document.getElementById("palette");
for (const c of colors) {
  const b = document.createElement("button");
  b.style.background = "#" + c;
  b.setAttribute("aria-label", "#" + c);
  palette.append(b);
}
```
FILE: styles.css
```css
* { box-sizing: border-box; }
html, body { height: 100%; }
body { margin: 0; font: 17px/22px "Open Sans", "Noto Sans", sans-serif; color: #000; background: #fff; overflow: hidden; }
h1, h2, h3, p, dl, dd, ul { margin: 0; padding: 0; font-size: inherit; font-weight: 400; }
button { margin: 0; padding: 0; border: 0; background: none; font: inherit; color: inherit; display: flex; align-items: center; justify-content: center; }
input, select { font: inherit; color: inherit; margin: 0; border-radius: 0; }
u { text-decoration: underline; text-decoration-thickness: 2px; text-underline-offset: 3px; text-decoration-skip-ink: none; }
svg { display: block; flex: none; }
.defs { position: absolute; }
.i9 { width: 9px; height: 9px; }
.i10 { width: 10px; height: 10px; }
.i12 { width: 12px; height: 12px; }
.i14 { width: 14px; height: 14px; }
.i16 { width: 16px; height: 16px; }
.i18 { width: 18px; height: 18px; }
.i20 { width: 20px; height: 20px; }
.i24 { width: 24px; height: 24px; }
.left { transform: rotate(-90deg); }
.right { transform: rotate(90deg); }
.down { transform: rotate(180deg); }

.desktop { height: 100vh; display: flex; flex-direction: column; }
.app { position: relative; flex: 1; min-height: 0; display: flex; flex-direction: column; background: #f0f0f0; overflow: hidden; }

.titlebar { height: 35px; display: flex; align-items: center; padding: 0 2px; background: #fff; }
.title { flex: 1; margin-left: 6px; }
.winbtns { display: flex; }
.winbtns button { width: 70px; height: 34px; }
.menubar { height: 30px; display: flex; align-items: center; gap: 13px; padding: 1px 8px 0; background: #fff; border-bottom: 1px solid #d9d9d9; }

.toolbar { height: 48px; display: flex; background: #fff; border-bottom: 1px solid #d9d9d9; align-items: center; padding-left: 2px; }
.group { display: flex; align-items: center; height: 28px; }
.group button { width: 26px; height: 28px; }
.group + .group { border-left: 1px solid #a0a0a0; margin-left: 5px; padding-left: 6px; }
.fields { color: #777; font-size: 16px; }
.group.fields { padding-left: 15px; }
.fields label { width: 17px; }
.fields label[for="fw"] { width: 23px; }
.fields label[for="fh"] { width: 19px; }
.num { width: 62px; height: 28px; border: 1px solid #a0a0a4; border-right: 0; padding: 0 0 0 4px; background: #f0f0f0; color: #777; font-size: 15px; box-shadow: inset 0 0 0 1px #fff; }
.spin { width: 11px; height: 28px; display: flex; flex-direction: column; justify-content: space-between; border: 1px solid #d9d9d9; background: #f0f0f0; margin-right: 10px; flex: none; }
.group .spin button, .spin button { width: 100%; height: 8px; }
.spin button::before { content: ""; border: 4px solid transparent; border-top: 0; border-bottom: 5px solid #666; }
.spin button + button::before { border-top: 5px solid #666; border-bottom: 0; }
.fields input#fw + .spin { margin-right: 0; }
.group .lock { width: 28px; margin-right: 8px; }
.fields input#fh + .spin { margin-right: 1px; }
.combo { appearance: none; border: 1px solid #a0a0a4; color: #000; padding: 0 4px; background: #fff; }
.combo { background-image: url("data:image/svg+xml,%3Csvg xmlns='http://www.w3.org/2000/svg' width='12' height='8'%3E%3Cpath d='m1 1 5 5 5-5' fill='none' stroke='%23555'/%3E%3C/svg%3E"), linear-gradient(#e1e1e1, #e1e1e1), linear-gradient(#a9a9ad, #a9a9ad); background-repeat: no-repeat; }
.unit { width: 58px; height: 28px; background-position: right 5px center, right 1px center, right center; background-size: 12px 8px, 21px 24px, 23px 28px; padding: 0 2px; }
.group.toggles { padding-left: 6px; }
.group.toggles button { height: 44px; border: 1px solid transparent; }
.group.toggles .on, .on { background: #cce8ff; border: 1px solid #99d1ff; }

.work { flex: 1; min-height: 0; display: flex; }
.toolbox { width: 34px; background: #fff; padding: 1px 2px; display: flex; flex-direction: column; }
.toolbox button { width: 30px; height: 30px; }
.toolbox .on { height: 29px; margin-bottom: 1px; }
.toolbox svg { width: 24px; height: 24px; overflow: visible; }

.view { flex: 1; min-width: 0; display: grid; grid-template: 20px minmax(0, 1fr) 25px / 21px minmax(0, 1fr) 25px; padding-right: 6px; }
.corner, .zoomcell { display: flex; align-items: center; justify-content: center; }
.corner { padding: 2px 13px 0 0; }
.corner svg { margin-left: 8px; }
.hruler { width: 100%; height: 20px; font-size: 12px; }
.vruler { width: 21px; height: 100%; font-size: 12px; }
.canvas { background: #fff; overflow: hidden; }
.vscroll { display: flex; flex-direction: column; align-items: center; padding: 4px 0 8px; border-left: 1px solid #fff; }
.vscroll .track { flex: 1; width: 100%; margin: 4px 0; display: flex; flex-direction: column; }
.vscroll .thumb { height: 238px; margin-top: 277px; background: #cdcdcd; }
.hscroll { display: flex; align-items: center; padding: 0 8px; }
.hscroll .track { flex: 1; height: 24px; margin: 0 6px; display: flex; padding-left: 56px; }
.hscroll .thumb { width: 1139px; background: #cdcdcd; flex: 0 1 auto; }

.dock { width: 335px; border-top: 2px solid #000; border-left: 2px solid #000; }
.dockhead { height: 26px; display: flex; align-items: center; border-bottom: 1px solid #a0a0a0; padding-right: 8px; }
.dockhead svg { margin-bottom: 2px; }
.dockhead h2 { flex: 1; white-space: nowrap; }
.dockhead button + button { margin-left: 10px; }
.dockbody { height: 397px; padding: 4px 8px 0 5px; border-bottom: 1px solid #fff; border-right: 1px solid #fff; }
.tabs { display: flex; align-items: flex-end; height: 34px; }
.tabs button { height: 32px; padding: 2px 5px 0 4px; gap: 5px; border: 1px solid #d9d9d9; border-left: 0; border-bottom: 0; }
.tabs .active { height: 35px; background: #fff; margin-bottom: -1px; border-left: 1px solid #d9d9d9; }
.tabpage { height: 276px; background: #fff; border: 1px solid #d9d9d9; margin-bottom: 4px; padding: 12px 6px; }
.paints { display: flex; gap: 10px; padding-left: 5px; }
.unset { width: 20px; height: 20px; font-size: 24px; font-weight: 700; color: #333; }
.noobj { margin-top: 15px; font-weight: 700; }
.slider { display: flex; height: 34px; align-items: center; border: 1px solid #a0a0a4; border-right: 0; margin: 0 11px 4px 0; background: #f0f0f0; padding-left: 5px; box-shadow: inset 1px 1px #fff; }
.slider label { flex: 1; white-space: nowrap; }
.slider input { width: 80px; border: 0; background: none; text-align: right; padding: 0 4px; }
.slider .spin { height: 32px; margin-right: -11px; }
.slider.off, .slider.off input { color: #808080; }
.slider.full { background: linear-gradient(#b5c2cc, #b5c2cc) no-repeat 2px 2px, linear-gradient(#000, #000) no-repeat 3px 3px, #f0f0f0; background-size: calc(100% - 5px) 28px, calc(100% - 5px) 28px; }

.commands { width: 61px; background: #fff; border-left: 1px solid #ddd; display: flex; padding: 2px 2px 0 2px; gap: 5px; overflow: hidden; }
.col { width: 25px; display: flex; flex-direction: column; align-items: center; }
.col button { width: 25px; height: 25px; margin-bottom: 1px; flex: none; }
.col hr { width: 16px; border: 0; border-top: 1px solid #a0a0a0; margin: 5px 0; }

.palette { height: 16px; border-top: 2px solid #222; display: flex; padding-left: 2px; overflow: hidden; background: #fff; flex: none; }
.palette button { width: 14px; height: 14px; flex: none; }
.palscroll { height: 19px; border-top: 3px solid #fff; display: flex; align-items: center; padding-left: 7px; flex: none; }
.palscroll svg { opacity: .4; margin-right: 7px; }
.palscroll .thumb { width: 586px; height: 14px; background: #cdcdcd; }
.status { height: 42px; display: flex; align-items: center; flex: none; padding: 1px 0 0 2px; border-bottom: 1px solid #c0c0c0; font-size: 15px; line-height: 21px; }
.style { display: grid; grid-template-columns: 70px 52px; }
.opacity { display: flex; align-items: center; border-right: 1px solid #a0a0a0; height: 100%; }
.opacity label { width: 16px; }
.opacity .num { width: 36px; }
.opacity .spin { margin-right: 3px; }
.layer { display: flex; height: 100%; padding-left: 2px; }
.layer button { width: 19px; }
.layers { width: 114px; height: 40px; font-weight: 700; margin-left: 1px; background-position: right 8px center, right 1px center, right center; background-size: 12px 8px, 27px 37px, 29px 40px; }
.hint { flex: 1; font-size: 17px; white-space: nowrap; overflow: hidden; }
.coords { display: grid; grid-template-columns: 24px 72px; border-left: 1px solid #a0a0a0; padding-left: 3px; }
.coords dd { font: 16px/21px "Liberation Mono", monospace; }
.zoomlabel { width: 71px; }

.props { position: absolute; top: 272px; right: 0; bottom: 0; width: 58px; background: #f0f0f0; border: 1px solid #a0a0a0; border-width: 1px 0 0 2px; overflow: hidden; white-space: nowrap; box-shadow: 0 0 10px rgba(0,0,0,.3); }
.ptitle { height: 36px; background: #fff; display: flex; align-items: center; gap: 6px; color: #999; padding-left: 1px; }
.phead { height: 25px; display: flex; align-items: center; gap: 1px; border-bottom: 1px solid #a0a0a0; }
.pbody { margin: 4px 0 0 3px; border-left: 1px solid #d9d9d9; border-top: 1px solid #d9d9d9; background: #fff; height: 100%; padding-left: 3px; }
.pbody h3 { font-weight: 700; }
.ptab { padding: 8px 0 0 5px; }
.general { margin-top: 11px; }
.size { margin-top: 49px; }
.sizes { list-style: none; margin: 3px 0 0 18px; border: 1px solid #a0a0a0; height: 130px; padding: 1px; overflow: hidden; }
.sizes li { height: 33px; padding: 6px 0 0 4px; }
.sel { background: #f0f0f0; }
.orient { margin: 9px 0 0 18px; }
fieldset { margin: 0 0 0 18px; border: 1px solid #a0a0a0; padding: 0 0 0 9px; min-width: 200px; }
legend { padding: 0 2px; margin-left: -6px; }
fieldset p { display: flex; align-items: center; gap: 5px; }
.custom { margin-top: 8px; height: 134px; padding-top: 82px; }
.scale { margin-top: 7px; height: 101px; }
.scale p { padding-left: 2px; margin-top: 11px; }
.scale .vb { margin-top: 16px; padding-left: 0; }
.pbody .bg { margin: 20px 0 0 18px; }
.check { display: flex; margin: 7px 0 0 36px; }
.check input { appearance: none; width: 13px; height: 13px; border: 1px solid #222; background: #fff; }
.bgc { margin: 11px 0 0 36px; }
.pbody .disp { margin: 3px 0 0 18px; }

.taskbar { height: 60px; flex: none; display: flex; background: #060c14; color: #fff; }
.start { width: 72px; }
.search { width: 516px; background: #f1f1f1; display: flex; align-items: center; padding: 0 22px 0 13px; }
.search input { flex: 1; border: 0; background: none; padding: 2px 0 0 13px; font-size: 20px; }
.search input::placeholder { color: #333; opacity: 1; }
.tasks { display: flex; flex: 1; padding-left: 4px; gap: 2px; }
.tasks button { width: 73px; }
.tasks svg { width: 36px; height: 36px; }
.run { background: linear-gradient(#76b9ed, #76b9ed) no-repeat center bottom / 61px 3px; }
.current { background-color: #3a3f47; background-size: 73px 3px; }
.tray { display: flex; align-items: center; }
.tray > svg { margin-right: 13px; }
.tray > svg:first-child { margin-right: 32px; }
.lang { margin: 0 21px 0 4px; }
.clock { display: flex; flex-direction: column; align-items: center; line-height: 28px; font-size: 18px; }
.notify { margin: 8px 0 0 28px; }
.peek { width: 1px; height: 100%; background: #666; margin: 0 6px 0 16px; }
```
